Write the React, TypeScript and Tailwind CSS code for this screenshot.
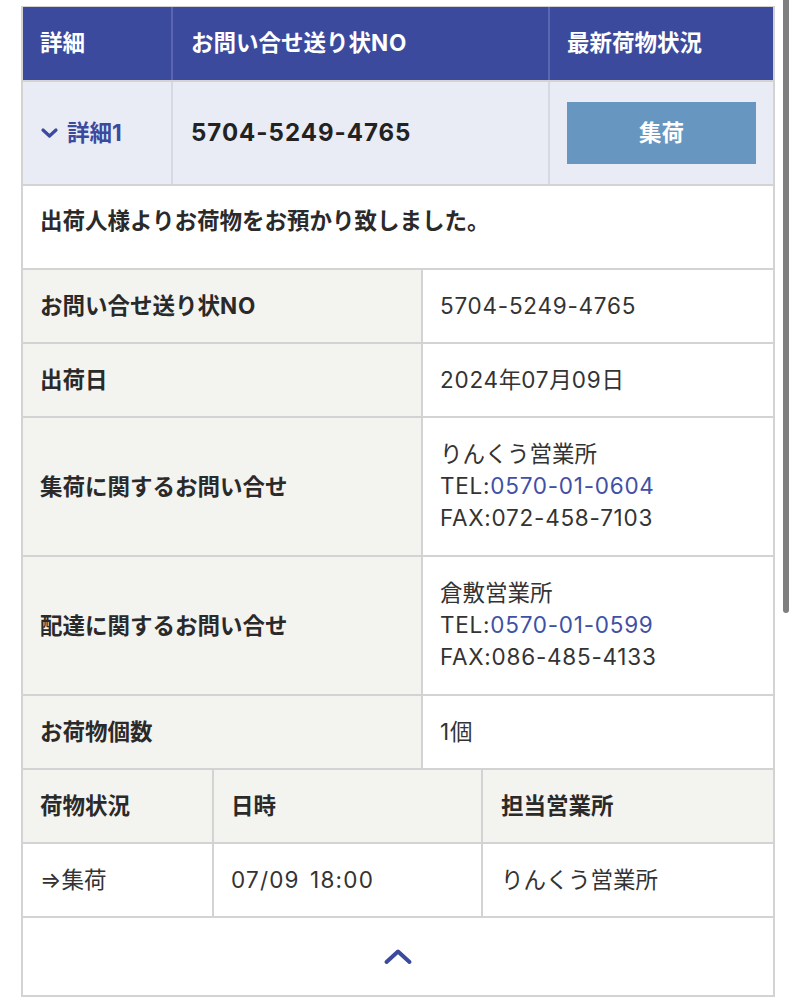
import React from "react";

function T({ s }: { s: string }) {
  const parts = s.match(/[\x20-\x7e]+|[^\x20-\x7e]+/g) || [];
  return (
    <>
      {parts.map((p, i) =>
        /^[\x20-\x7e]+$/.test(p) ? (
          <span key={i} className="tracking-[0.75px]">
            {p}
          </span>
        ) : (
          <span key={i}>{p}</span>
        )
      )}
    </>
  );
}

function ChevronDown() {
  return (
    <svg width="19" height="12" viewBox="0 0 19 12" className="shrink-0">
      <polyline points="3,3 9.5,9 16,3" fill="none" stroke="#3c4a9e" strokeWidth="3.2" strokeLinecap="round" strokeLinejoin="round" />
    </svg>
  );
}

function ChevronUp() {
  return (
    <svg width="30" height="18" viewBox="0 0 30 18">
      <polyline points="3.5,14 15,3.5 26.5,14" fill="none" stroke="#3c4a9e" strokeWidth="4" strokeLinecap="round" strokeLinejoin="round" />
    </svg>
  );
}

function Contact({ name, tel, fax }: { name: string; tel: string; fax: string }) {
  return (
    <div>
      <div>{name}</div>
      <div>
        <span className="tracking-[0.75px]">TEL:</span>
        <span className="tracking-[0.75px] text-[#3f51a6]">{tel}</span>
      </div>
      <div className="tracking-[0.75px]">FAX:{fax}</div>
    </div>
  );
}

const details: { label: string; value: React.ReactNode; multi?: boolean }[] = [
  { label: "お問い合せ送り状NO", value: <T s="5704-5249-4765" /> },
  { label: "出荷日", value: <T s="2024年07月09日" /> },
  {
    label: "集荷に関するお問い合せ",
    value: <Contact name="りんくう営業所" tel="0570-01-0604" fax="072-458-7103" />,
    multi: true,
  },
  {
    label: "配達に関するお問い合せ",
    value: <Contact name="倉敷営業所" tel="0570-01-0599" fax="086-485-4133" />,
    multi: true,
  },
  { label: "お荷物個数", value: <T s="1個" /> },
];

export default function App() {
  return (
    <div className="relative min-h-[999px] w-full overflow-hidden bg-white font-['Inter','Noto_Sans_CJK_JP',sans-serif] text-[22.5px] leading-[32px] text-[#333]">
      <div className="ml-[21px] w-[754px] pt-[6px]">
        <div className="border-x-2 border-t border-[#d3d3d3]">
          {/* header */}
          <div className="grid grid-cols-[148px_377px_225px] border-b-2 border-[#d3d3d3] bg-[#3c4a9e] font-bold text-white">
            <div className="px-[17px] pb-[21px] pt-[20px]">詳細</div>
            <div className="border-l-2 border-[#5a66b2] px-[18px] pb-[21px] pt-[20px]">
              <T s="お問い合せ送り状NO" />
            </div>
            <div className="border-l-2 border-[#5a66b2] px-[17px] pb-[21px] pt-[20px]">最新荷物状況</div>
          </div>
          {/* row 2 */}
          <div className="grid grid-cols-[148px_377px_225px] border-b-2 border-[#d3d3d3] bg-[#e9ecf4]">
            <div className="flex items-center gap-[8px] pl-[17px] font-bold text-[#3c4a9e]">
              <ChevronDown />
              <span>
                <T s="詳細1" />
              </span>
            </div>
            <div className="flex items-center border-l-2 border-[#d6d9e2] px-[18px] text-[24px] font-bold tracking-[1px] text-[#222]">
              5704-5249-4765
            </div>
            <div className="border-l-2 border-[#d6d9e2] px-[17px] py-[20px]">
              <div className="flex h-[62px] items-center justify-center bg-[#6796c0] font-bold text-white">集荷</div>
            </div>
          </div>
          {/* message */}
          <div className="border-b-2 border-[#d3d3d3] px-[17px] pb-[31px] pt-[19px] font-bold text-[#2a2a2a]">
            出荷人様よりお荷物をお預かり致しました。
          </div>
          {/* details */}
          {details.map((d) => (
            <div key={d.label} className="grid grid-cols-[398px_352px] border-b-2 border-[#d3d3d3]">
              <div className="flex items-center bg-[#f3f3f0] px-[17px] font-bold text-[#2a2a2a]">
                <span>
                  <T s={d.label} />
                </span>
              </div>
              <div
                className={
                  d.multi
                    ? "border-l-2 border-[#d3d3d3] px-[17px] pb-[21px] pt-[20px]"
                    : "border-l-2 border-[#d3d3d3] px-[17px] py-[20px]"
                }
              >
                {d.value}
              </div>
            </div>
          ))}
          {/* tracking header */}
          <div className="grid grid-cols-[189px_269px_292px] border-b-2 border-[#d3d3d3] bg-[#f3f3f0] font-bold text-[#2a2a2a]">
            <div className="px-[17px] py-[20px]">荷物状況</div>
            <div className="border-l-2 border-[#d3d3d3] px-[17px] py-[20px]">日時</div>
            <div className="border-l-2 border-[#d3d3d3] px-[18px] py-[20px]">担当営業所</div>
          </div>
          {/* tracking row */}
          <div className="grid grid-cols-[189px_269px_292px] border-b-2 border-[#d3d3d3]">
            <div className="px-[17px] py-[20px]">⇒集荷</div>
            <div className="border-l-2 border-[#d3d3d3] px-[17px] py-[20px] tracking-[1.2px]">
              07/09<span className="tracking-[4px]"> </span>18:00
            </div>
            <div className="border-l-2 border-[#d3d3d3] px-[18px] py-[20px]">りんくう営業所</div>
          </div>
          {/* footer */}
          <div className="flex h-[79px] items-center justify-center border-b-2 border-[#d3d3d3]">
            <ChevronUp />
          </div>
        </div>
      </div>
      {/* scrollbar overlay */}
      <div className="absolute right-[6px] top-0 h-[613px] w-[6px] rounded-b-full bg-[#7f7f7f]" />
    </div>
  );
}
